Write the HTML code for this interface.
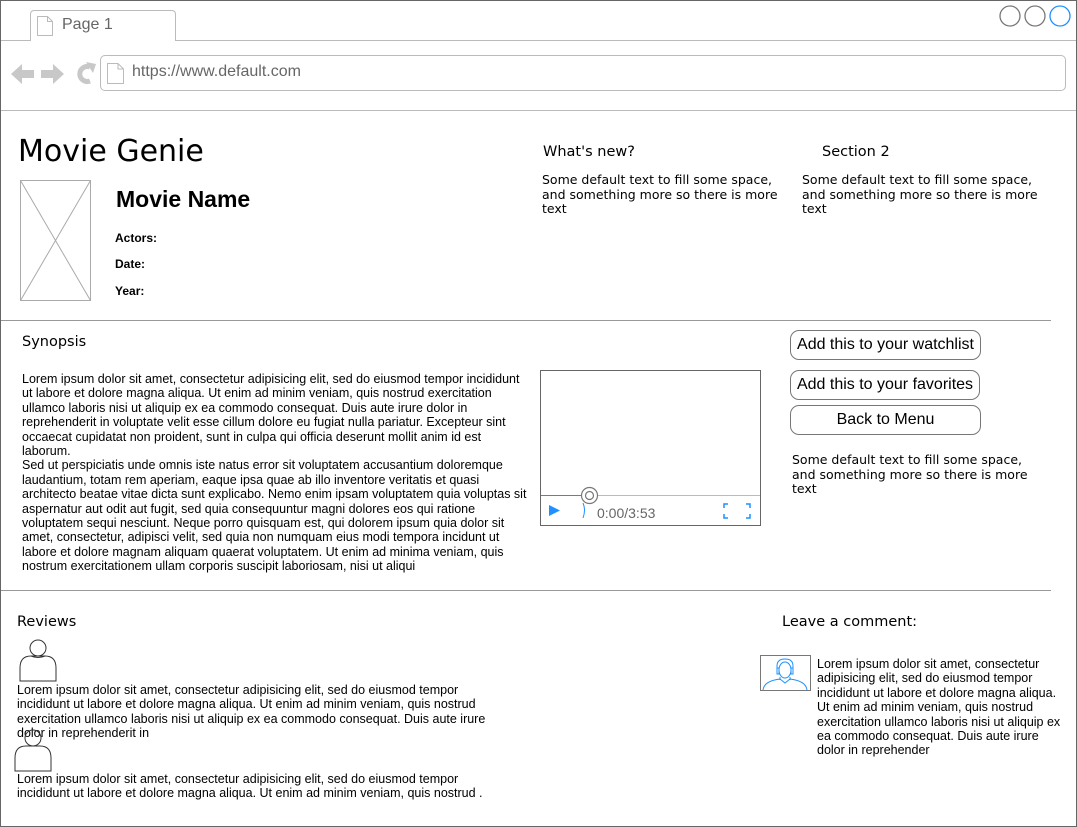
<!DOCTYPE html>
<html><head><meta charset="utf-8"><style>
*{margin:0;padding:0;box-sizing:border-box}
body{width:1077px;height:827px;position:relative;background:#fff;font-family:"Liberation Sans",Arial,sans-serif;color:#000;overflow:hidden}
.a{position:absolute}
.dv{font-family:"DejaVu Sans",sans-serif}
.t12{font-size:12.5px;line-height:14.4px}
.dj13{font-family:"DejaVu Sans",sans-serif;font-size:12.5px;line-height:14.5px}
.btn{position:absolute;border:1px solid #777;border-radius:9px;font-size:16px;text-align:center;line-height:28px;height:30px;background:#fff}
</style></head><body>
<div class="a" style="left:0;top:0;width:1077px;height:827px;border:1px solid #666"></div>
<!-- tab -->
<div class="a" style="left:30px;top:10px;width:146px;height:31px;border:1px solid #bbb;border-bottom:none;border-radius:4px 4px 0 0;background:#fff"></div>
<div class="a" style="left:1px;top:40px;width:29px;height:1px;background:#bbb"></div>
<div class="a" style="left:176px;top:40px;width:900px;height:1px;background:#bbb"></div>
<svg class="a" style="left:36px;top:15px" width="18" height="22"><path d="M1.5 1.5H11.5L16.5 6.5V20.5H1.5Z M11.5 1.5V6.5H16.5" fill="none" stroke="#bbb"/></svg>
<div class="a" style="left:62px;top:15px;font-size:16px;line-height:19px;color:#666">Page 1</div>
<svg class="a" style="left:998px;top:4px" width="76" height="24"><circle cx="12" cy="12" r="10" fill="none" stroke="#777" stroke-width="1.3"/><circle cx="37" cy="12" r="10" fill="none" stroke="#777" stroke-width="1.3"/><circle cx="62" cy="12" r="10" fill="none" stroke="#1e90ff" stroke-width="1.3"/></svg>
<!-- nav -->
<svg class="a" style="left:10px;top:60px" width="86" height="30"><path d="M1 14L12 4V10H24V18H12V24Z" fill="#c8c8c8"/><path d="M54 14L43 4V10H31V18H43V24Z" fill="#c8c8c8"/><path d="M80 7 A7.5 7.5 0 1 0 80 21" fill="none" stroke="#c8c8c8" stroke-width="5"/><path d="M76 2L86 4L83 13Z" fill="#c8c8c8"/></svg>
<div class="a" style="left:100px;top:55px;width:966px;height:36px;border:1px solid #bbb;border-radius:5px"></div>
<svg class="a" style="left:106px;top:62px" width="20" height="24"><path d="M1.5 1.5H12L17.5 7V21.5H1.5Z M12 1.5V7H17.5" fill="none" stroke="#bbb"/></svg>
<div class="a" style="left:132px;top:63px;font-size:16px;color:#666">https://www.default.com</div>
<div class="a" style="left:1px;top:110px;width:1075px;height:1px;background:#bbb"></div>
<!-- header content -->
<div class="a dv" style="left:18px;top:134px;font-size:30px">Movie Genie</div>
<svg class="a" style="left:20px;top:180px" width="72" height="122"><rect x="0.5" y="0.5" width="70" height="120" fill="none" stroke="#aaa"/><path d="M0.5 0.5L70.5 120.5M70.5 0.5L0.5 120.5" stroke="#aaa"/></svg>
<div class="a" style="left:116px;top:186px;font-size:23px;font-weight:bold">Movie Name</div>
<div class="a" style="left:115px;top:231px;font-size:12px;font-weight:bold">Actors:</div>
<div class="a" style="left:115px;top:257px;font-size:12px;font-weight:bold">Date:</div>
<div class="a" style="left:115px;top:284px;font-size:12px;font-weight:bold">Year:</div>
<div class="a dv" style="left:543px;top:144px;font-size:14.5px">What's new?</div>
<div class="a dv" style="left:822px;top:144px;font-size:14.5px">Section 2</div>
<div class="a dj13" style="left:542px;top:173px;width:250px">Some default text to fill some space, and something more so there is more text</div>
<div class="a dj13" style="left:802px;top:173px;width:250px">Some default text to fill some space, and something more so there is more text</div>
<div class="a" style="left:1px;top:320px;width:1050px;height:1px;background:#999"></div>
<!-- synopsis -->
<div class="a dv" style="left:22px;top:334px;font-size:14.5px">Synopsis</div>
<div class="a t12" style="left:22px;top:372px;width:508px">Lorem ipsum dolor sit amet, consectetur adipisicing elit, sed do eiusmod tempor incididunt ut labore et dolore magna aliqua. Ut enim ad minim veniam, quis nostrud exercitation ullamco laboris nisi ut aliquip ex ea commodo consequat. Duis aute irure dolor in reprehenderit in voluptate velit esse cillum dolore eu fugiat nulla pariatur. Excepteur sint occaecat cupidatat non proident, sunt in culpa qui officia deserunt mollit anim id est laborum.<br>Sed ut perspiciatis unde omnis iste natus error sit voluptatem accusantium doloremque laudantium, totam rem aperiam, eaque ipsa quae ab illo inventore veritatis et quasi architecto beatae vitae dicta sunt explicabo. Nemo enim ipsam voluptatem quia voluptas sit aspernatur aut odit aut fugit, sed quia consequuntur magni dolores eos qui ratione voluptatem sequi nesciunt. Neque porro quisquam est, qui dolorem ipsum quia dolor sit amet, consectetur, adipisci velit, sed quia non numquam eius modi tempora incidunt ut labore et dolore magnam aliquam quaerat voluptatem. Ut enim ad minima veniam, quis nostrum exercitationem ullam corporis suscipit laboriosam, nisi ut aliqui</div>
<!-- video -->
<div class="a" style="left:540px;top:370px;width:221px;height:156px;border:1px solid #666"></div>
<div class="a" style="left:541px;top:495px;width:48px;height:1px;background:#1e90ff"></div>
<div class="a" style="left:589px;top:495px;width:171px;height:1px;background:#bbb"></div>
<svg class="a" style="left:580px;top:486px" width="19" height="19"><circle cx="9.5" cy="9.5" r="8" fill="#fff" stroke="#777" stroke-width="1.2"/><circle cx="9.5" cy="9.5" r="4" fill="none" stroke="#777" stroke-width="1.2"/></svg>
<svg class="a" style="left:548px;top:504px" width="14" height="14"><path d="M1 1L12 6.5L1 12Z" fill="#1e90ff"/></svg>
<svg class="a" style="left:580px;top:502px" width="8" height="18"><path d="M3 1Q6 8 3 16" fill="none" stroke="#1e90ff"/></svg>
<div class="a" style="left:597px;top:505px;font-size:14px;color:#666">0:00/3:53</div>
<svg class="a" style="left:723px;top:503px" width="28" height="16"><path d="M1 5V1H5M23 1H27V5M27 11V15H23M5 15H1V11" fill="none" stroke="#1e90ff" stroke-width="1.5"/></svg>
<!-- buttons -->
<div class="btn" style="left:790px;top:330px;width:191px">Add this to your watchlist</div>
<div class="btn" style="left:790px;top:370px;width:190px">Add this to your favorites</div>
<div class="btn" style="left:790px;top:405px;width:191px">Back to Menu</div>
<div class="a dj13" style="left:792px;top:453px;width:250px">Some default text to fill some space, and something more so there is more text</div>
<div class="a" style="left:1px;top:590px;width:1050px;height:1px;background:#999"></div>
<!-- reviews -->
<div class="a dv" style="left:17px;top:614px;font-size:14.5px">Reviews</div>
<svg class="a" style="left:19px;top:638px" width="38" height="44"><circle cx="19" cy="10" r="8" fill="#fff" stroke="#333"/><path d="M1 43V30Q1 18 12 18H26Q37 18 37 30V43Z" fill="#fff" stroke="#333"/><path d="M12 18Q19 21 26 18" fill="none" stroke="#333"/></svg>
<div class="a t12" style="left:17px;top:683px;width:475px">Lorem ipsum dolor sit amet, consectetur adipisicing elit, sed do eiusmod tempor incididunt ut labore et dolore magna aliqua. Ut enim ad minim veniam, quis nostrud exercitation ullamco laboris nisi ut aliquip ex ea commodo consequat. Duis aute irure dolor in reprehenderit in</div>
<svg class="a" style="left:14px;top:728px" width="38" height="44"><circle cx="19" cy="10" r="8" fill="none" stroke="#333"/><path d="M1 43V30Q1 18 12 18H26Q37 18 37 30V43Z" fill="#fff" stroke="#333"/></svg>
<div class="a t12" style="left:17px;top:772px;width:475px">Lorem ipsum dolor sit amet, consectetur adipisicing elit, sed do eiusmod tempor incididunt ut labore et dolore magna aliqua. Ut enim ad minim veniam, quis nostrud .</div>
<div class="a dv" style="left:782px;top:614px;font-size:14.5px">Leave a comment:</div>
<svg class="a" style="left:760px;top:655px" width="51" height="36"><rect x="0.5" y="0.5" width="50" height="35" fill="#fff" stroke="#777"/><g fill="none" stroke="#1e90ff"><ellipse cx="25" cy="15" rx="6" ry="8"/><path d="M17 16V11Q17 4 25 4Q33 4 33 11V16M17 13H19V19H17ZM31 13H33V19H31Z"/><path d="M3 35Q4 26 20 24L25 28L30 24Q46 26 47 35M20 22V25M30 22V25"/></g></svg>
<div class="a t12" style="left:817px;top:657px;width:250px">Lorem ipsum dolor sit amet, consectetur adipisicing elit, sed do eiusmod tempor incididunt ut labore et dolore magna aliqua. Ut enim ad minim veniam, quis nostrud exercitation ullamco laboris nisi ut aliquip ex ea commodo consequat. Duis aute irure dolor in reprehender</div>
</body></html>
